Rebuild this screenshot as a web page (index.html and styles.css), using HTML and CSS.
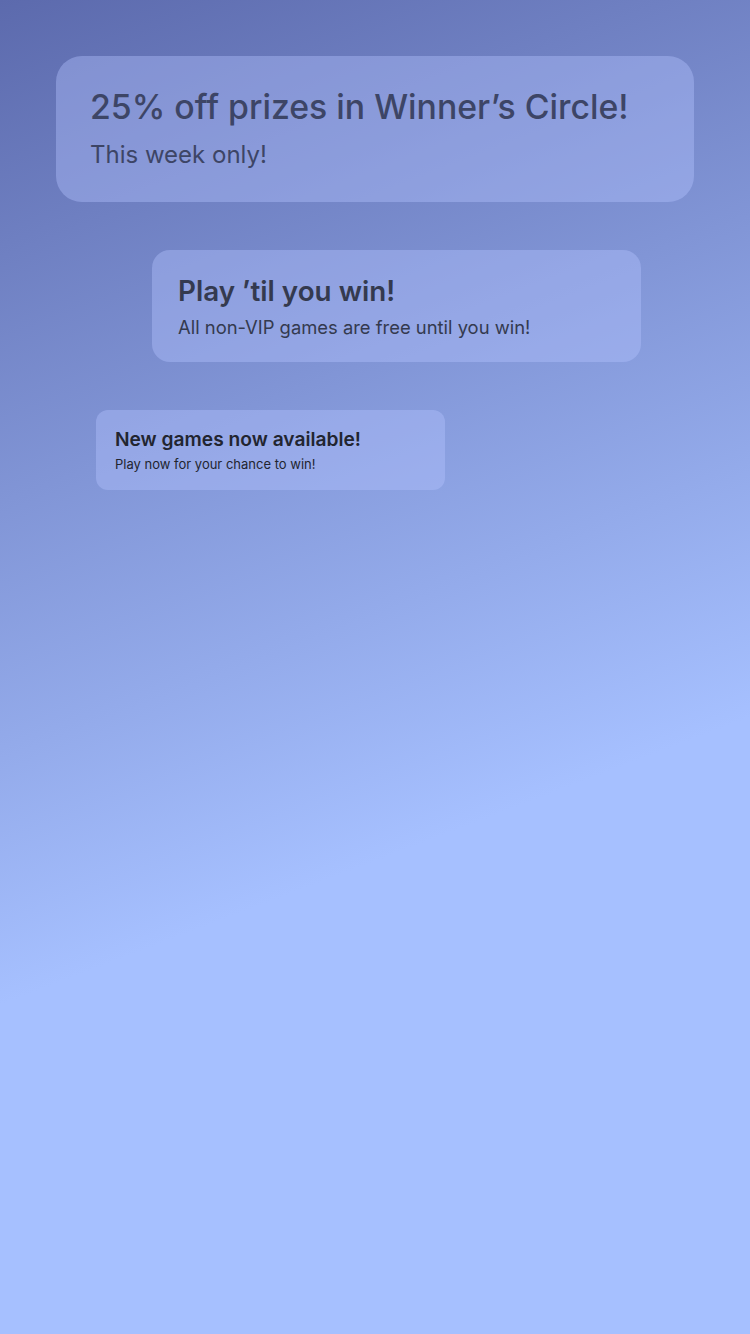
FILE: index.html
```html
<!DOCTYPE html>
<html>
<head>
<meta charset="utf-8">
<link rel="stylesheet" href="styles.css">
</head>
<body>
<main class="screen">
  <section class="card card-lg">
    <h1 class="title">25% off prizes in Winner’s Circle!</h1>
    <p class="sub">This week only!</p>
  </section>
  <section class="card card-md">
    <h2 class="title">Play ’til you win!</h2>
    <p class="sub">All non-VIP games are free until you win!</p>
  </section>
  <section class="card card-sm">
    <h3 class="title">New games now available!</h3>
    <p class="sub">Play now for your chance to win!</p>
  </section>
</main>
</body>
</html>
```

FILE: styles.css
```css
html, body {
  margin: 0;
  padding: 0;
}
body {
  width: 750px;
  height: 1334px;
  overflow: hidden;
  font-family: Inter, "Noto Sans", sans-serif;
  background: linear-gradient(159deg, #5c6aad 0%, #a6c0ff 62%, #a6c0ff 100%);
}
.screen {
  display: flex;
  flex-direction: column;
  align-items: flex-start;
  padding-top: 56px;
  gap: 48px;
}
.card {
  background: rgba(180, 195, 255, 0.4);
  display: flex;
  flex-direction: column;
  justify-content: center;
  box-sizing: border-box;
}
.title, .sub {
  margin: 0;
  font-weight: 400;
}
.card-lg {
  margin-left: 56px;
  width: 638px;
  height: 146px;
  border-radius: 26px;
  padding-left: 34px;
  color: #3d4566;
}
.card-lg .title {
  font-size: 33.8px;
  font-weight: 500;
  line-height: 44px;
}
.card-lg .sub {
  font-size: 24px;
  line-height: 36px;
  margin-top: 8px;
}
.card-md {
  margin-left: 152px;
  width: 489px;
  height: 112px;
  border-radius: 18px;
  padding-left: 26px;
  color: #343a4f;
}
.card-md .title {
  font-size: 27.8px;
  font-weight: 600;
  line-height: 36px;
}
.card-md .sub {
  font-size: 18.4px;
  line-height: 26px;
  margin-top: 5px;
}
.card-sm {
  margin-left: 96px;
  width: 349px;
  height: 80px;
  border-radius: 12px;
  padding-left: 19px;
  color: #222530;
}
.card-sm .title {
  font-size: 19.2px;
  font-weight: 600;
  line-height: 26px;
}
.card-sm .sub {
  font-size: 13px;
  line-height: 20px;
  margin-top: 2px;
}
```
